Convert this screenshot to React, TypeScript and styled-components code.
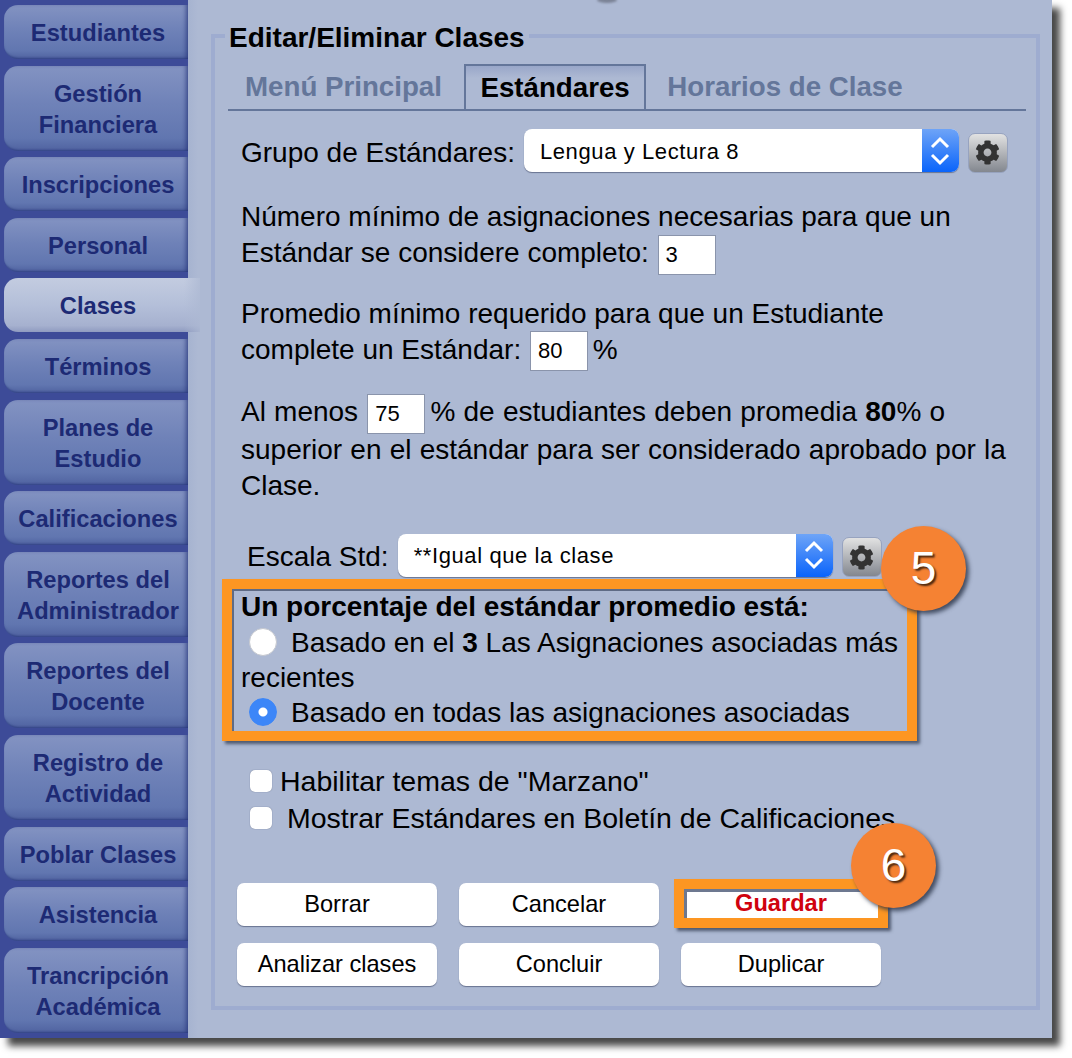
import React from "react";
import styled, { createGlobalStyle } from "styled-components";
import { FaCog } from "react-icons/fa";

const navItems = [
  { label: ["Estudiantes"] },
  { label: ["Gestión", "Financiera"] },
  { label: ["Inscripciones"] },
  { label: ["Personal"] },
  { label: ["Clases"], active: true },
  { label: ["Términos"] },
  { label: ["Planes de", "Estudio"] },
  { label: ["Calificaciones"] },
  { label: ["Reportes del", "Administrador"] },
  { label: ["Reportes del", "Docente"] },
  { label: ["Registro de", "Actividad"] },
  { label: ["Poblar Clases"] },
  { label: ["Asistencia"] },
  { label: ["Trancripción", "Académica"] },
];

const Stepper = () => (
  <StepperBox>
    <svg width="24" height="32" viewBox="0 0 24 32" fill="none" stroke="#fff" strokeWidth="3">
      <path d="M4 12 L12 4 L20 12" />
      <path d="M4 20 L12 28 L20 20" />
    </svg>
  </StepperBox>
);

const Gear = () => (
  <GearButton>
    <FaCog size={25} />
  </GearButton>
);

const App = () => {
  return (
    <Page>
      <GlobalStyle />
      <Window>
        <Sidebar>
          {navItems.map((item) => (
            <NavTab key={item.label[0] + item.label.length} $active={item.active}>
              {item.label.map((line) => (
                <span key={line}>{line}</span>
              ))}
            </NavTab>
          ))}
        </Sidebar>
        <Main>
          <Panel>
            <PanelTitle>Editar/Eliminar Clases</PanelTitle>
            <Tabs>
              <Tab>Menú Principal</Tab>
              <Tab $active>Estándares</Tab>
              <Tab>Horarios de Clase</Tab>
            </Tabs>

            <SelectRow>
              <RowLabel>Grupo de Estándares:</RowLabel>
              <Select>
                <SelectText>Lengua y Lectura 8</SelectText>
                <Stepper />
              </Select>
              <Gear />
            </SelectRow>

            <Para $top={26}>
              Número mínimo de asignaciones necesarias para que un
              <br />
              Estándar se considere completo: <NumberBox>3</NumberBox>
            </Para>
            <Para $top={23}>
              Promedio mínimo requerido para que un Estudiante
              <br />
              complete un Estándar: <NumberBox>80</NumberBox> %
            </Para>
            <WidePara $top={25}>
              Al menos <NumberBox>75</NumberBox> % de estudiantes deben promedia <b>80</b>% o
              <br />
              superior en el estándar para ser considerado aprobado por la
              <br />
              Clase.
            </WidePara>

            <ScaleRow>
              <RowLabel>Escala Std:</RowLabel>
              <Select>
                <SelectText>**Igual que la clase</SelectText>
                <Stepper />
              </Select>
              <Gear />
            </ScaleRow>

            <Highlight>
              <HighlightTitle>Un porcentaje del estándar promedio está:</HighlightTitle>
              <RadioLine>
                <Radio />
                <span>
                  Basado en el <b>3</b> Las Asignaciones asociadas más
                </span>
              </RadioLine>
              <div>recientes</div>
              <RadioLine>
                <Radio $checked />
                <span>Basado en todas las asignaciones asociadas</span>
              </RadioLine>
              <Badge $top={-63} $right={-59}>5</Badge>
            </Highlight>

            <CheckList>
              <CheckLine $gap={8}>
                <CheckBox />
                <span>Habilitar temas de "Marzano"</span>
              </CheckLine>
              <CheckLine $gap={15}>
                <CheckBox />
                <span>Mostrar Estándares en Boletín de Calificaciones</span>
              </CheckLine>
            </CheckList>

            <Buttons>
              <Button>Borrar</Button>
              <Button>Cancelar</Button>
              <SaveFrame>
                <SaveButton>Guardar</SaveButton>
                <Badge $top={-66} $right={-58}>6</Badge>
              </SaveFrame>
              <Button>Analizar clases</Button>
              <Button>Concluir</Button>
              <Button>Duplicar</Button>
            </Buttons>
          </Panel>
        </Main>
      </Window>
    </Page>
  );
};

export default App;

const GlobalStyle = createGlobalStyle`
  html, body {
    margin: 0;
    background: #fff;
  }
  body {
    font-family: "Liberation Sans", Arial, sans-serif;
    color: #000;
  }
`;

const Page = styled.div`
  width: 1072px;
  height: 1058px;
  overflow: hidden;
`;

const Window = styled.div`
  display: flex;
  width: 1052px;
  height: 1038px;
  background: #adb9d3;
  box-shadow: 8px 8px 7px rgba(0, 0, 0, 0.72);
`;

const Sidebar = styled.nav`
  display: flex;
  flex-direction: column;
  gap: 6.6px;
  width: 184px;
  flex: none;
  padding: 5px 0 0 4px;
  background: #3d4b98;
  position: relative;
  z-index: 1;
`;

const NavTab = styled.div<{ $active?: boolean }>`
  display: flex;
  flex-direction: column;
  align-items: center;
  justify-content: center;
  line-height: 31px;
  padding: 13px 0 10px 4px;
  font-size: 23.7px;
  font-weight: 700;
  color: #1d2a74;
  border-radius: 14px 0 0 14px;
  background: ${(p) =>
    p.$active
      ? "linear-gradient(90deg, transparent 180px, #adb9d3 200px), linear-gradient(#c3cce0 0%, #b4bfd9 50%, #a6b1cf 88%, #8f9bc0 100%)"
      : "linear-gradient(#8393c2 0%, #6f82b8 45%, #6176b0 85%, #4f62a0 100%)"};
  box-shadow: ${(p) =>
    p.$active
      ? "none"
      : "inset -4px 0 4px -2px rgba(35, 50, 120, 0.7), inset 0 -2px 2px -1px rgba(35, 50, 120, 0.6)"};
  ${(p) => p.$active && "width: 196px; padding-right: 12px; box-sizing: border-box;"}
`;

const Main = styled.main`
  position: relative;
  flex: 1;
  padding: 34px 12px 28px 23px;
  min-width: 0;
  background: linear-gradient(90deg, #a6b3d0 0, #adb9d3 10px);

  /* bit of a control cut off by the top of the screenshot */
  &::before {
    content: "";
    position: absolute;
    top: -3px;
    left: 409px;
    width: 20px;
    height: 6px;
    border-radius: 50%;
    background: rgba(90, 95, 110, 0.6);
    filter: blur(1px);
  }
`;

const Panel = styled.section`
  position: relative;
  box-sizing: border-box;
  height: 976px;
  padding: 26px 10px 0 13px;
  border: 4px solid #9eacd0;
  font-size: 28px;
`;

const PanelTitle = styled.h2`
  position: absolute;
  top: -15px;
  left: 10px;
  margin: 0;
  padding: 0 4px;
  background: #adb9d3;
  font-size: 28px;
  line-height: 30px;
  font-weight: 700;
`;

const Tabs = styled.div`
  display: flex;
  align-items: flex-end;
  gap: 7px;
  height: 45px;
  padding-left: 3px;
  border-bottom: 2px solid #64769a;
`;

const Tab = styled.div<{ $active?: boolean }>`
  box-sizing: border-box;
  height: 45px;
  padding: 0 ${(p) => (p.$active ? "14.5px" : "15px 0 14px")};
  line-height: 45px;
  font-size: 27.7px;
  font-weight: 700;
  color: ${(p) => (p.$active ? "#000" : "#64769a")};
  ${(p) =>
    p.$active &&
    `border: 2px solid #64769a;
     border-bottom: none;
     background: linear-gradient(#99a7c9 0, #adb9d3 12px);
     line-height: 43px;`}
`;

const SelectRow = styled.div`
  display: flex;
  align-items: center;
  gap: 9px;
  height: 45px;
  margin-top: 17px;
  padding-left: 13px;
`;

const ScaleRow = styled(SelectRow)`
  margin-top: 29px;
  padding-left: 19px;
`;

const RowLabel = styled.span`
  padding-top: 4px;
`;

const Select = styled.div`
  display: flex;
  align-items: center;
  justify-content: space-between;
  box-sizing: border-box;
  width: 435px;
  height: 43px;
  background: #fff;
  border-radius: 8px;
  box-shadow: 0 1px 1px rgba(60, 70, 100, 0.6);
  overflow: hidden;
`;

const SelectText = styled.span`
  padding: 2px 0 0 16px;
  font-size: 22px;
  letter-spacing: 0.6px;
`;

const StepperBox = styled.div`
  display: flex;
  align-items: center;
  justify-content: center;
  width: 37px;
  height: 100%;
  background: linear-gradient(#6ea4f7, #0a64fb);
`;

const GearButton = styled.div`
  display: flex;
  align-items: center;
  justify-content: center;
  box-sizing: border-box;
  width: 40px;
  height: 40px;
  flex: none;
  margin-top: 4px;
  color: #333;
  border: 1px solid #97a3bf;
  border-radius: 7px;
  background: linear-gradient(#e2e2e2, #83878f);
`;

const Para = styled.p<{ $top: number }>`
  margin: ${(p) => p.$top}px 0 0;
  padding-left: 13px;
  line-height: 36px;
`;

const WidePara = styled(Para)`
  word-spacing: 0.4px;
`;

const NumberBox = styled.span`
  display: inline-block;
  box-sizing: border-box;
  width: 58px;
  height: 40px;
  margin: -2px -3px -2px 1px;
  padding-left: 7px;
  vertical-align: middle;
  background: #fff;
  border: 1px solid #8a94ab;
  font-size: 22px;
  line-height: 38px;
`;

const Highlight = styled.div`
  position: relative;
  box-sizing: border-box;
  width: 695px;
  height: 162px;
  margin: 1px 0 0 -6px;
  padding: 0 0 0 9px;
  border: 10px solid #fd9622;
  box-shadow: 3px 3px 3px rgba(40, 50, 70, 0.7), inset 2px 2px 0 #5f6b85;
  line-height: 35px;
`;

const HighlightTitle = styled.strong`
  display: block;
  line-height: 36px;
`;

const RadioLine = styled.div`
  display: flex;
  align-items: center;
  gap: 14px;
  padding-left: 8px;
`;

const Radio = styled.span<{ $checked?: boolean }>`
  flex: none;
  box-sizing: border-box;
  width: 28px;
  height: 28px;
  border-radius: 50%;
  background: ${(p) =>
    p.$checked
      ? "radial-gradient(circle, #fff 0 4px, #3c86f8 5px)"
      : "#fff"};
  border: 1px solid ${(p) => (p.$checked ? "#3c86f8" : "#c5c8cf")};
`;

const Badge = styled.div<{ $top: number; $right: number }>`
  position: absolute;
  top: ${(p) => p.$top}px;
  right: ${(p) => p.$right}px;
  display: flex;
  align-items: center;
  justify-content: center;
  width: 85px;
  height: 85px;
  border-radius: 50%;
  background: #f58233;
  color: #fff;
  font-size: 46px;
  text-shadow: 2px 2px 2px rgba(0, 0, 0, 0.7);
  box-shadow: 3px 3px 4px rgba(40, 50, 70, 0.8);
`;

const CheckList = styled.div`
  display: flex;
  flex-direction: column;
  gap: 1px;
  margin-top: 22px;
  padding-left: 22px;
  font-size: 28.5px;
  line-height: 36px;
`;

const CheckLine = styled.label<{ $gap: number }>`
  display: flex;
  align-items: center;
  gap: ${(p) => p.$gap}px;
`;

const CheckBox = styled.span`
  flex: none;
  width: 22px;
  height: 22px;
  background: #fff;
  border-radius: 5px;
  box-shadow: 0 0 1px rgba(60, 70, 100, 0.8);
`;

const Buttons = styled.div`
  display: grid;
  grid-template-columns: repeat(3, 200px);
  column-gap: 22px;
  row-gap: 15px;
  margin-top: 47px;
  padding-left: 9px;
`;

const Button = styled.div`
  height: 43px;
  line-height: 43px;
  text-align: center;
  font-size: 23.6px;
  background: #fff;
  border-radius: 7px;
  box-shadow: 0 1px 1px rgba(60, 70, 100, 0.6);
`;

const SaveFrame = styled.div`
  position: relative;
  box-sizing: border-box;
  height: 49px;
  margin: -4px -7px 0;
  border: 10px solid #fd9622;
  box-shadow: 3px 3px 3px rgba(40, 50, 70, 0.7);
  background: #fff;
`;

const SaveButton = styled.div`
  height: 29px;
  line-height: 29px;
  text-align: center;
  font-size: 23.6px;
  font-weight: 700;
  color: #d0020e;
  box-shadow: inset 3px 3px 0 #6d7890;
`;
